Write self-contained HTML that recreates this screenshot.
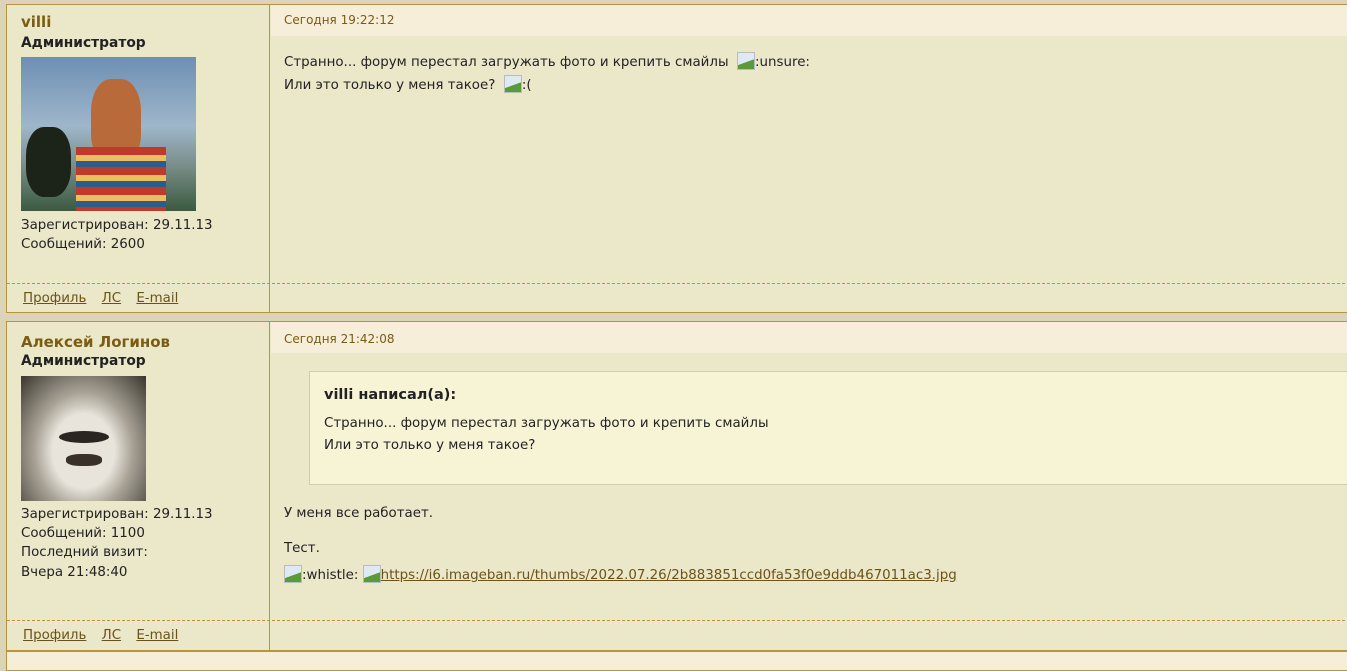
<!DOCTYPE html>
<html><head><meta charset="utf-8"><style>
*{margin:0;padding:0;box-sizing:border-box}
body{width:1347px;height:659px;overflow:hidden;background:#ddd3b9;font-family:"DejaVu Sans","Liberation Sans",sans-serif;font-size:13.4px;color:#222;position:relative}
.post{position:absolute;left:6px;width:1345px;border:1px solid #b89340;background:#ebe7c9}
.left{position:absolute;left:0;top:0;width:263px;border-right:1px solid #b89340}
.dash{position:absolute;left:0;right:0;border-top:1px dashed #b89340}
.t{position:absolute;white-space:nowrap}
.name{color:#7a5c12;font-weight:bold;font-size:15px}
.role{font-weight:bold;font-size:13.8px;color:#222}
.date{position:absolute;left:264px;right:0;top:0;height:31px;background:#f6eed9;color:#7a5c12;font-size:12px;padding:8px 0 0 13px}
a{color:#6b5318;text-decoration:underline}
.links a{margin-right:11px}
.bi{display:inline-block;width:18px;height:18px;vertical-align:-4px;border:1px solid #bbb;background:linear-gradient(160deg,#dfe9f3 55%,#5a9a3a 56%)}
.quote{position:absolute;left:302px;right:-2px;top:49px;height:114px;background:#f7f4d6;border:1px solid #cfcab0;border-right:none}
</style></head><body>
<div class="post" style="top:4px;height:309px">
 <div class="left" style="height:307px"></div>
 <div class="date">Сегодня 19:22:12</div>
 <div class="t name" style="left:14px;top:8px">villi</div>
 <div class="t role" style="left:14px;top:30px">Администратор</div>
 <div class="t" style="left:14px;top:52px;width:175px;height:154px;background:linear-gradient(180deg,#6d8fb3 0%,#9fb6cb 45%,#7a8f8a 70%,#3a5a40 100%)">
  <div style="position:absolute;left:70px;top:22px;width:50px;height:80px;background:#b86a3a;border-radius:40% 40% 30% 30%"></div>
  <div style="position:absolute;left:55px;top:90px;width:90px;height:64px;background:repeating-linear-gradient(180deg,#c0392b 0 8px,#e8c060 8px 14px,#2b5c8a 14px 20px)"></div>
  <div style="position:absolute;left:5px;top:70px;width:45px;height:70px;background:#1c241a;border-radius:40%"></div>
 </div>
 <div class="t" style="left:14px;top:213px">Зарегистрирован: 29.11.13</div>
 <div class="t" style="left:14px;top:232px">Сообщений: 2600</div>
 <div class="t" style="left:277px;top:47px">Странно... форум перестал загружать фото и крепить смайлы &nbsp;<span class="bi"></span>:unsure:</div>
 <div class="t" style="left:277px;top:70px">Или это только у меня такое? &nbsp;<span class="bi"></span>:(</div>
 <div class="dash" style="top:278px"></div>
 <div class="t links" style="left:16px;top:286px"><a>Профиль</a> <a>ЛС</a> <a>E-mail</a></div>
</div>
<div class="post" style="top:321px;height:330px">
 <div class="left" style="height:328px"></div>
 <div class="date" style="padding-top:10px">Сегодня 21:42:08</div>
 <div class="t name" style="left:14px;top:11px">Алексей Логинов</div>
 <div class="t role" style="left:14px;top:31px">Администратор</div>
 <div class="t" style="left:14px;top:54px;width:125px;height:125px;background:radial-gradient(ellipse at 50% 60%,#e8e4dc 0 35%,#a9a397 55%,#3a362e 100%)">
  <div style="position:absolute;left:38px;top:55px;width:50px;height:12px;background:#2a2520;border-radius:50%"></div>
  <div style="position:absolute;left:45px;top:78px;width:36px;height:12px;background:#3a302a;border-radius:40%"></div>
 </div>
 <div class="t" style="left:14px;top:185px">Зарегистрирован: 29.11.13</div>
 <div class="t" style="left:14px;top:204px">Сообщений: 1100</div>
 <div class="t" style="left:14px;top:223px">Последний визит:</div>
 <div class="t" style="left:14px;top:243px">Вчера 21:48:40</div>
 <div class="quote">
  <div class="t" style="left:14px;top:15px;font-weight:bold;font-size:14.5px">villi написал(а):</div>
  <div class="t" style="left:14px;top:44px">Странно... форум перестал загружать фото и крепить смайлы</div>
  <div class="t" style="left:14px;top:66px">Или это только у меня такое?</div>
 </div>
 <div class="t" style="left:277px;top:184px">У меня все работает.</div>
 <div class="t" style="left:277px;top:219px">Тест.</div>
 <div class="t" style="left:277px;top:243px"><span class="bi"></span>:whistle: <span class="bi"></span><a>https://i6.imageban.ru/thumbs/2022.07.26/2b883851ccd0fa53f0e9ddb467011ac3.jpg</a></div>
 <div class="dash" style="top:298px"></div>
 <div class="t links" style="left:16px;top:306px"><a>Профиль</a> <a>ЛС</a> <a>E-mail</a></div>
</div>
<div class="post" style="top:651px;height:20px;background:#f6eed9"></div>
</body></html>
